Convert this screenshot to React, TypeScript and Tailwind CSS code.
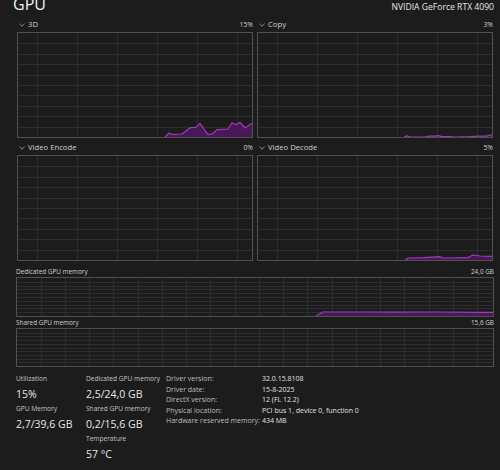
import React from "react";

type Pt = [number, number];

function Graph({
  w,
  h,
  vStart,
  vStep,
  rows,
  pts,
}: {
  w: number;
  h: number;
  vStart: number;
  vStep: number;
  rows: number;
  pts?: Pt[];
}) {
  const vs: number[] = [];
  for (let x = vStart; x < w; x += vStep) vs.push(Math.round(x) + 0.5);
  const hs: number[] = [];
  for (let k = 1; k < rows; k++) hs.push(Math.round((k * h) / rows) + 0.5);
  let area = "";
  let line = "";
  if (pts && pts.length) {
    line = pts.map((p) => `${p[0]},${p[1]}`).join(" ");
    area = `${pts[0][0]},${h} ${line} ${pts[pts.length - 1][0]},${h}`;
  }
  return (
    <svg width={w} height={h} className="block">
      {vs.map((x) => (
        <line key={"v" + x} x1={x} y1={0} x2={x} y2={h} stroke="#2e2e2e" strokeWidth={1} />
      ))}
      {hs.map((y) => (
        <line key={"h" + y} x1={0} y1={y} x2={w} y2={y} stroke="#2e2e2e" strokeWidth={1} />
      ))}
      {pts && (
        <>
          <polygon points={area} fill="#4a1858" />
          <polyline points={line} fill="none" stroke="#9b3db6" strokeWidth={1.2} strokeLinejoin="round" />
        </>
      )}
    </svg>
  );
}

function Chevron() {
  return (
    <svg width="6" height="4" viewBox="0 0 6 4" className="mr-[3px]">
      <path d="M0.5 0.8 L3 3.2 L5.5 0.8" fill="none" stroke="#9a9a9a" strokeWidth="0.9" />
    </svg>
  );
}

function EngineCell({ label, pct, pts }: { label: string; pct: string; pts?: Pt[] }) {
  return (
    <div className="flex flex-col">
      <div className="h-[13px] pb-[1px] flex items-center justify-between text-[7.7px] text-[#cfcfcf]">
        <div className="flex items-center pl-[2px]">
          <Chevron />
          <span>{label}</span>
        </div>
        <span className="text-[6.8px]">{pct}</span>
      </div>
      <div className="h-[106px] border border-[#505050]">
        <Graph w={234} h={104} vStart={19} vStep={40} rows={10} pts={pts} />
      </div>
    </div>
  );
}

const p3d: Pt[] = [
  [147, 104], [151, 100], [154, 101.3], [164, 101], [167, 98.7], [172, 94.7], [178, 94.3],
  [182, 90.3], [186, 96.3], [190, 101.7], [194, 101], [199, 96.7], [206, 96.3], [210, 96],
  [214, 89.7], [218, 91.7], [222, 89.3], [227, 95], [234, 90.3],
];
const pCopy: Pt[] = [
  [146, 104], [149, 102.7], [152, 104], [167, 104], [171, 103], [176, 103.2], [180, 102.6],
  [184, 103.5], [192, 103.6], [197, 104], [212, 103.6], [222, 103], [228, 103.2], [233, 102],
  [234, 101.5],
];
const pDecode: Pt[] = [
  [147.5, 104], [150, 102], [166, 101.6], [182, 100.7], [185, 102], [210, 101.7], [214.7, 99],
  [222, 100], [234, 100.3],
];
const pDed: Pt[] = [
  [299, 38], [306, 34], [340, 34], [380, 34.2], [420, 34], [460, 34.3], [476, 34.3],
];

function Stat({ label, value }: { label: string; value: string }) {
  return (
    <div>
      <div className="h-[10px] leading-[10px] text-[6.6px] text-[#c4c4c4]">{label}</div>
      <div className="h-[20px] leading-[20px] text-[10.5px] text-[#e8e8e8]">{value}</div>
    </div>
  );
}

export default function App() {
  const info: [string, string][] = [
    ["Driver version:", "32.0.15.8108"],
    ["Driver date:", "15-8-2025"],
    ["DirectX version:", "12 (FL 12.2)"],
    ["Physical location:", "PCI bus 1, device 0, function 0"],
    ["Hardware reserved memory:", "434 MB"],
  ];
  return (
    <div
      className="w-[500px] h-[470px] overflow-hidden bg-[#1c1c1c] text-[#e6e6e6]"
      style={{ fontFamily: "'Open Sans', 'Noto Sans', sans-serif" }}
    >
      <div className="h-[19px] pl-[13px] pr-[6px] flex flex-col">
        <div className="flex items-baseline justify-between -mt-[4px]">
          <span className="text-[16px] leading-[16px] text-[#f2f2f2]">GPU</span>
          <span className="text-[8.6px] text-[#e6e6e6]">NVIDIA GeForce RTX 4090</span>
        </div>
      </div>

      <div className="ml-[17px] w-[476px] grid grid-cols-2 gap-x-[4px] gap-y-[4px]">
        <EngineCell label="3D" pct="15%" pts={p3d} />
        <EngineCell label="Copy" pct="3%" pts={pCopy} />
        <EngineCell label="Video Encode" pct="0%" />
        <EngineCell label="Video Decode" pct="5%" pts={pDecode} />
      </div>

      <div className="ml-[16px] w-[478px] mt-[5px]">
        <div className="h-[11px] flex items-center justify-between text-[6.4px] text-[#cfcfcf]">
          <span>Dedicated GPU memory</span>
          <span>24,0 GB</span>
        </div>
        <div className="h-[40px] border border-[#505050]">
          <Graph w={476} h={38} vStart={23.7} vStep={24.25} rows={10} pts={pDed} />
        </div>
        <div className="h-[11px] flex items-center justify-between text-[6.4px] text-[#cfcfcf]">
          <span>Shared GPU memory</span>
          <span>15,6 GB</span>
        </div>
        <div className="h-[39px] border border-[#505050]">
          <Graph w={476} h={37} vStart={23.7} vStep={24.25} rows={10} />
        </div>
      </div>

      <div className="flex items-start mt-[7px]">
        <div className="pl-[16px] w-[86px]">
          <Stat label="Utilization" value="15%" />
          <Stat label="GPU Memory" value="2,7/39,6 GB" />
        </div>
        <div className="w-[80px]">
          <Stat label="Dedicated GPU memory" value="2,5/24,0 GB" />
          <Stat label="Shared GPU memory" value="0,2/15,6 GB" />
          <Stat label="Temperature" value="57 °C" />
        </div>
        <div className="grid grid-cols-[96px_auto] content-start text-[7px] leading-[10.5px]">
          {info.map(([k, v]) => (
            <React.Fragment key={k}>
              <span className="text-[#bdbdbd]">{k}</span>
              <span className="text-[#e0e0e0]">{v}</span>
            </React.Fragment>
          ))}
        </div>
      </div>
    </div>
  );
}
